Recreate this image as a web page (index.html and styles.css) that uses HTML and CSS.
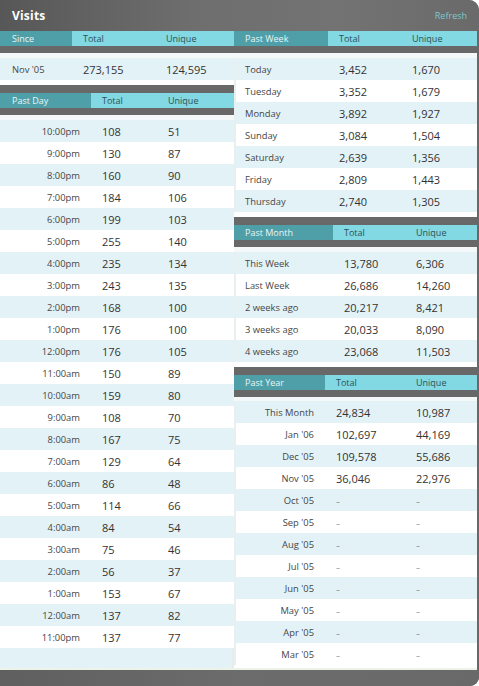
FILE: index.html
```html
<!DOCTYPE html>
<html>
<head>
<meta charset="utf-8">
<title>Visits</title>
<link rel="stylesheet" href="styles.css">
</head>
<body>
<div class="panel">
  <div class="titlebar">
    <span class="title">Visits</span>
    <a class="refresh">Refresh</a>
  </div>
  <div class="columns">
    <div class="col col-left">
      <section class="stats since first">
        <div class="head"><span>Since</span><span>Total</span><span>Unique</span></div>
        <div class="rows">
          <div class="row"><span class="label">Nov '05</span><span class="num">273,155</span><span class="num">124,595</span></div>
        </div>
      </section>
      <section class="stats day">
        <div class="head"><span>Past Day</span><span>Total</span><span>Unique</span></div>
        <div class="rows right-labels">
          <div class="row"><span class="label">10:00pm</span><span class="num">108</span><span class="num">51</span></div>
          <div class="row"><span class="label">9:00pm</span><span class="num">130</span><span class="num">87</span></div>
          <div class="row"><span class="label">8:00pm</span><span class="num">160</span><span class="num">90</span></div>
          <div class="row"><span class="label">7:00pm</span><span class="num">184</span><span class="num">106</span></div>
          <div class="row"><span class="label">6:00pm</span><span class="num">199</span><span class="num">103</span></div>
          <div class="row"><span class="label">5:00pm</span><span class="num">255</span><span class="num">140</span></div>
          <div class="row"><span class="label">4:00pm</span><span class="num">235</span><span class="num">134</span></div>
          <div class="row"><span class="label">3:00pm</span><span class="num">243</span><span class="num">135</span></div>
          <div class="row"><span class="label">2:00pm</span><span class="num">168</span><span class="num">100</span></div>
          <div class="row"><span class="label">1:00pm</span><span class="num">176</span><span class="num">100</span></div>
          <div class="row"><span class="label">12:00pm</span><span class="num">176</span><span class="num">105</span></div>
          <div class="row"><span class="label">11:00am</span><span class="num">150</span><span class="num">89</span></div>
          <div class="row"><span class="label">10:00am</span><span class="num">159</span><span class="num">80</span></div>
          <div class="row"><span class="label">9:00am</span><span class="num">108</span><span class="num">70</span></div>
          <div class="row"><span class="label">8:00am</span><span class="num">167</span><span class="num">75</span></div>
          <div class="row"><span class="label">7:00am</span><span class="num">129</span><span class="num">64</span></div>
          <div class="row"><span class="label">6:00am</span><span class="num">86</span><span class="num">48</span></div>
          <div class="row"><span class="label">5:00am</span><span class="num">114</span><span class="num">66</span></div>
          <div class="row"><span class="label">4:00am</span><span class="num">84</span><span class="num">54</span></div>
          <div class="row"><span class="label">3:00am</span><span class="num">75</span><span class="num">46</span></div>
          <div class="row"><span class="label">2:00am</span><span class="num">56</span><span class="num">37</span></div>
          <div class="row"><span class="label">1:00am</span><span class="num">153</span><span class="num">67</span></div>
          <div class="row"><span class="label">12:00am</span><span class="num">137</span><span class="num">82</span></div>
          <div class="row"><span class="label">11:00pm</span><span class="num">137</span><span class="num">77</span></div>
        </div>
      </section>
      <div class="filler filler-blue"></div>
    </div>
    <div class="col col-right">
      <section class="stats week first">
        <div class="head"><span>Past Week</span><span>Total</span><span>Unique</span></div>
        <div class="rows">
          <div class="row"><span class="label">Today</span><span class="num">3,452</span><span class="num">1,670</span></div>
          <div class="row"><span class="label">Tuesday</span><span class="num">3,352</span><span class="num">1,679</span></div>
          <div class="row"><span class="label">Monday</span><span class="num">3,892</span><span class="num">1,927</span></div>
          <div class="row"><span class="label">Sunday</span><span class="num">3,084</span><span class="num">1,504</span></div>
          <div class="row"><span class="label">Saturday</span><span class="num">2,639</span><span class="num">1,356</span></div>
          <div class="row"><span class="label">Friday</span><span class="num">2,809</span><span class="num">1,443</span></div>
          <div class="row"><span class="label">Thursday</span><span class="num">2,740</span><span class="num">1,305</span></div>
        </div>
      </section>
      <section class="stats month">
        <div class="head"><span>Past Month</span><span>Total</span><span>Unique</span></div>
        <div class="rows">
          <div class="row"><span class="label">This Week</span><span class="num">13,780</span><span class="num">6,306</span></div>
          <div class="row"><span class="label">Last Week</span><span class="num">26,686</span><span class="num">14,260</span></div>
          <div class="row"><span class="label">2 weeks ago</span><span class="num">20,217</span><span class="num">8,421</span></div>
          <div class="row"><span class="label">3 weeks ago</span><span class="num">20,033</span><span class="num">8,090</span></div>
          <div class="row"><span class="label">4 weeks ago</span><span class="num">23,068</span><span class="num">11,503</span></div>
        </div>
      </section>
      <section class="stats year">
        <div class="head"><span>Past Year</span><span>Total</span><span>Unique</span></div>
        <div class="rows right-labels">
          <div class="row"><span class="label">This Month</span><span class="num">24,834</span><span class="num">10,987</span></div>
          <div class="row"><span class="label">Jan '06</span><span class="num">102,697</span><span class="num">44,169</span></div>
          <div class="row"><span class="label">Dec '05</span><span class="num">109,578</span><span class="num">55,686</span></div>
          <div class="row"><span class="label">Nov '05</span><span class="num">36,046</span><span class="num">22,976</span></div>
          <div class="row"><span class="label">Oct '05</span><span class="dash">–</span><span class="dash">–</span></div>
          <div class="row"><span class="label">Sep '05</span><span class="dash">–</span><span class="dash">–</span></div>
          <div class="row"><span class="label">Aug '05</span><span class="dash">–</span><span class="dash">–</span></div>
          <div class="row"><span class="label">Jul '05</span><span class="dash">–</span><span class="dash">–</span></div>
          <div class="row"><span class="label">Jun '05</span><span class="dash">–</span><span class="dash">–</span></div>
          <div class="row"><span class="label">May '05</span><span class="dash">–</span><span class="dash">–</span></div>
          <div class="row"><span class="label">Apr '05</span><span class="dash">–</span><span class="dash">–</span></div>
          <div class="row"><span class="label">Mar '05</span><span class="dash">–</span><span class="dash">–</span></div>
        </div>
      </section>
      <div class="filler"></div>
    </div>
  </div>
  <div class="footer"></div>
</div>
</body>
</html>
```

FILE: styles.css
```css
html, body {
  margin: 0;
  padding: 0;
  background: #ffffff;
}

body {
  font-family: "Open Sans", "Noto Sans", sans-serif;
  width: 479px;
  height: 686px;
  overflow: hidden;
}

.panel {
  width: 479px;
  height: 686px;
  display: flex;
  flex-direction: column;
  background: #686868;
  border-radius: 0 10px 9px 0;
  overflow: hidden;
}

.titlebar {
  height: 31px;
  flex: none;
  display: flex;
  align-items: center;
  justify-content: space-between;
  padding: 0 12px 0 12px;
  background: linear-gradient(to right, #575757 0%, #6e6e6e 40%, #737373 70%, #6a6a6a 100%);
  box-sizing: border-box;
}

.title {
  color: #ffffff;
  font-weight: 700;
  font-size: 12px;
  letter-spacing: 0.2px;
  margin-top: -1px;
}

.refresh {
  color: #80c8cc;
  font-size: 9px;
  margin-top: -1px;
}

.columns {
  flex: 1;
  display: grid;
  grid-template-columns: 234px 243px;
  padding-right: 2px;
  background: #686868;
  min-height: 0;
}

.col {
  display: flex;
  flex-direction: column;
  background: #ffffff;
  border-bottom: 2px solid #edf3e9;
}

.col-left {
  box-shadow: inset -2px 0 0 #e7eded;
}

.stats {
  display: flex;
  flex-direction: column;
}

.head {
  display: grid;
  height: 15px;
  background: #82d8e3;
  border-top: 8px solid #686868;
  border-bottom: 7px solid #686868;
  font-size: 9px;
  line-height: 15px;
  color: #2a5258;
}

.first .head {
  border-top: 0;
}

.head span {
  padding-left: 11px;
  white-space: nowrap;
}

.head span:first-child {
  background: #4f9fa8;
  color: #e6f6f7;
}

.col-left .head span:first-child {
  padding-left: 12px;
}

.rows {
  padding-top: 5px;
  padding-bottom: 5px;
  background: linear-gradient(#f5f8f8, #f5f8f8) top / 100% 5px no-repeat, #ffffff;
}

.year .rows {
  padding-top: 4px;
  padding-bottom: 0;
}

.row {
  display: grid;
  height: 22px;
  align-items: center;
  background: #ffffff;
}

.row:nth-child(odd) {
  background: #e3f2f7;
}

.col-right .row {
  box-shadow: inset 2px 0 0 #e9efef;
}

.row span {
  padding-left: 11px;
  white-space: nowrap;
}

.label {
  font-size: 9.4px;
  color: #464646;
}

.col-left .label {
  padding-left: 12px;
}

.right-labels .label {
  text-align: right;
  padding-left: 0;
  padding-right: 11px;
}

.num {
  font-size: 11px;
  color: #333333;
}

.dash {
  font-size: 8px;
  color: #7a7a7a;
}

.since .head, .since .row { grid-template-columns: 72px 83px 1fr; }
.day .head, .day .row { grid-template-columns: 91px 66px 1fr; }
.week .head, .week .row { grid-template-columns: 94px 73px 1fr; }
.month .head, .month .row { grid-template-columns: 99px 72px 1fr; }
.year .head, .year .row { grid-template-columns: 91px 80px 1fr; }

.day .rows {
  padding-bottom: 0;
}

.filler {
  flex: 1;
  background: #ffffff;
}

.filler-blue {
  background: #e3f2f7;
  box-shadow: inset -2px 0 0 #e7eded;
}

.footer {
  height: 16px;
  flex: none;
  background: linear-gradient(to right, #5f5f5f 0%, #6c6c6c 50%, #696969 100%);
}
```
